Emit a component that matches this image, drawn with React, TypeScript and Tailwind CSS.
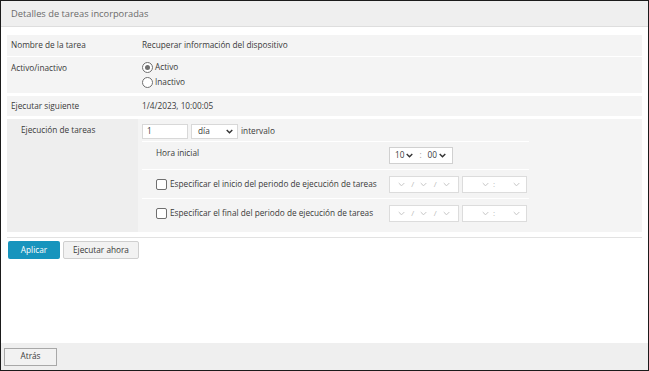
import React from "react";

const Chev = ({ c = "#333", w = 7 }: { c?: string; w?: number }) => (
  <svg width={w} height={w * 0.7} viewBox="0 0 10 7" className="shrink-0">
    <path d="M1 1.5 L5 5.5 L9 1.5" fill="none" stroke={c} strokeWidth={c === "#333" ? 2 : 1} />
  </svg>
);

const Radio = ({ checked }: { checked?: boolean }) => (
  <span className="w-[11px] h-[11px] rounded-full border border-[#6f6f6f] bg-white flex items-center justify-center shrink-0">
    {checked && <span className="w-[5px] h-[5px] rounded-full bg-[#6f6f6f]" />}
  </span>
);

const Check = () => (
  <span className="w-[11px] h-[11px] rounded-[2px] border border-[#6f6f6f] bg-white shrink-0" />
);

const DateSel = () => (
  <div className="flex gap-[3px]">
    <div className="w-[70px] h-[17px] bg-white border border-[#dcdcdc] flex items-center justify-around px-[5px] text-[#bbb] text-[8px]">
      <Chev c="#aaa" w={7} />
      <span>/</span>
      <Chev c="#aaa" w={7} />
      <span>/</span>
      <Chev c="#aaa" w={7} />
    </div>
    <div className="w-[65px] h-[17px] bg-white border border-[#dcdcdc] flex items-center justify-end gap-[4px] pr-[6px] text-[#bbb] text-[8px]">
      <Chev c="#aaa" w={7} />
      <span className="mr-[14px]">:</span>
      <Chev c="#aaa" w={7} />
    </div>
  </div>
);

export default function App() {
  return (
    <div className="w-[649px] h-[371px] border border-[#1b1b1b] bg-white flex flex-col text-[#3a3a3a] font-['Open_Sans',sans-serif] text-[8.25px]">
      <div className="h-[26px] bg-[#efefef] border-b border-[#dedede] pl-[10px] flex items-center text-[9.3px] text-[#6a6a6a] shrink-0">
        Detalles de tareas incorporadas
      </div>
      <div className="flex-1 pl-[6px] pr-[6px] pt-[8px] flex flex-col">
        <div className="flex h-[21px] bg-[#f4f4f4] items-center">
          <div className="w-[131px] pl-[4px]">Nombre de la tarea</div>
          <div className="pl-[4px]">Recuperar información del dispositivo</div>
        </div>
        <div className="flex h-[36px] bg-[#f4f4f4] mt-[1px]">
          <div className="w-[131px] pl-[4px] pt-[5px]">Activo/inactivo</div>
          <div className="pl-[4px] pt-[4px] flex flex-col gap-[3px]">
            <label className="flex items-center gap-[2px]"><Radio checked />Activo</label>
            <label className="flex items-center gap-[2px]"><Radio />Inactivo</label>
          </div>
        </div>
        <div className="flex h-[20px] bg-[#f4f4f4] items-center mt-[3px]">
          <div className="w-[131px] pl-[4px]">Ejecutar siguiente</div>
          <div className="pl-[4px]">1/4/2023, 10:00:05</div>
        </div>
        <div className="flex h-[113px] bg-[#f4f4f4] mt-[3px]">
          <div className="w-[131px] pl-[14px] pt-[5px] bg-[#eeeeee]">Ejecución de tareas</div>
          <div className="pl-[4px] pt-[5px] flex flex-col">
            <div className="flex items-center h-[15px]">
              <div className="w-[46px] h-[15px] bg-white border border-[#d8d8d8] pl-[4px] flex items-center">1</div>
              <div className="ml-[3px] w-[47px] h-[15px] bg-white border border-[#d8d8d8] pl-[6px] pr-[4px] flex items-center justify-between">
                <span>día</span>
                <Chev />
              </div>
              <span className="ml-[3px]">intervalo</span>
            </div>
            <div className="w-[387px] mt-[2px] border-t border-white flex flex-col">
              <div className="h-[28px] flex items-center border-b border-white">
                <div className="w-[247px] pl-[14px] self-start pt-[5px]">Hora inicial</div>
                <div className="w-[64px] h-[17px] bg-white border border-[#d0d0d0] flex items-center px-[5px] gap-[2px]">
                  <span>10</span><Chev />
                  <span className="mx-[4px] text-[#999]">:</span>
                  <span>00</span><Chev />
                </div>
              </div>
              <div className="h-[29px] flex items-center border-b border-white">
                <div className="w-[247px] pl-[14px] flex items-center gap-[3px]"><Check />Especificar el inicio del periodo de ejecución de tareas</div>
                <DateSel />
              </div>
              <div className="h-[28px] flex items-center">
                <div className="w-[247px] pl-[14px] flex items-center gap-[3px]"><Check />Especificar el final del periodo de ejecución de tareas</div>
                <DateSel />
              </div>
            </div>
          </div>
        </div>
        <div className="mt-[5px] border-t border-[#e2e2e2] pt-[3px] flex gap-[3px] pl-[1px]">
          <button className="w-[52px] h-[18px] rounded-[2px] bg-[#1794bd] text-white text-[8.25px] flex items-center justify-center">Aplicar</button>
          <button className="w-[76px] h-[18px] rounded-[2px] bg-[#f2f2f2] border border-[#cfcfcf] text-[8.25px] flex items-center justify-center">Ejecutar ahora</button>
        </div>
      </div>
      <div className="h-[27px] bg-[#efefef] flex items-center pl-[3px] shrink-0">
        <button className="w-[53px] h-[18px] bg-[#f2f2f2] border border-[#a8a8a8] text-[8.25px] flex items-center justify-center">Atrás</button>
      </div>
    </div>
  );
}
